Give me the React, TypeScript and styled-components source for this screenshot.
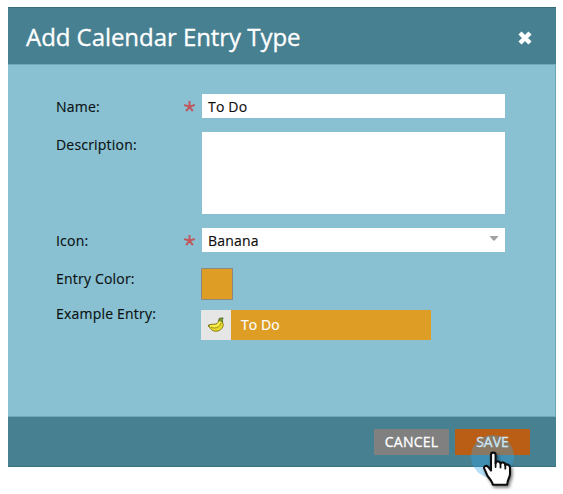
import React from 'react';
import styled, { createGlobalStyle } from 'styled-components';

const GlobalStyle = createGlobalStyle`
  *, *::before, *::after { box-sizing: border-box; }
  body { margin: 0; background: #fff; font-family: 'Open Sans', 'Noto Sans', sans-serif; }
`;

const Page = styled.main`
  height: 494px;
  padding: 7px 0 0 8px;
  overflow: hidden;
`;

const Dialog = styled.section`
  display: flex;
  flex-direction: column;
  width: 548px;
  height: 460px;
  background: #89c1d2;
  border-right: 1px solid #6ba3b5;
`;

const Header = styled.header`
  display: flex;
  align-items: center;
  justify-content: space-between;
  height: 58px;
  margin-right: -1px;
  padding: 2px 23px 0 18px;
  background: #478091;
  border-top: 1px solid #386d7d;
  border-bottom: 1px solid #6fa9ba;
`;

const Title = styled.h1`
  margin: 0;
  color: #fff;
  font-size: 24px;
  line-height: 32px;
  font-weight: 400;
  letter-spacing: -0.05px;
  white-space: nowrap;
  -webkit-text-stroke: 0.3px #fff;
`;

const CloseButton = styled.button`
  display: flex;
  padding: 2px 0 0;
  border: 0;
  background: none;
`;

const Form = styled.form`
  flex: 1;
  padding: 29px 0 0 48px;
`;

const Row = styled.div<{ $height: number; $gap: number }>`
  display: grid;
  grid-template-columns: 127px 19px 303px;
  height: ${(p) => p.$height}px;
  margin-bottom: ${(p) => p.$gap}px;
`;

const Label = styled.label<{ $top?: number }>`
  margin-top: ${(p) => p.$top ?? 3}px;
  color: #0a1011;
  font-size: 14px;
  line-height: 20px;
  letter-spacing: 0.2px;
  white-space: nowrap;
  -webkit-text-stroke: 0.15px #0a1011;
`;

const Required = styled.svg`
  width: 13px;
  height: 13px;
  margin: 6px 0 0 0;
`;

const Field = styled.div`
  display: flex;
  align-items: center;
  justify-content: space-between;
  grid-column: 3;
  padding: 2px 6px 0;
  background: #fff;
  color: #0c0c0c;
  font-size: 14px;
  line-height: 20px;
  letter-spacing: 0.2px;
  -webkit-text-stroke: 0.15px #0c0c0c;
`;

const Arrow = styled.svg`
  margin-top: -5px;
`;

const Swatch = styled.div`
  grid-column: 3;
  width: 32px;
  height: 32px;
  margin-left: -1px;
  background: #de9d24;
  border: 1px solid #8b8882;
`;

const Entry = styled.div`
  display: flex;
  grid-column: 3;
  width: 230px;
  margin-left: -1px;
  background: #de9d24;
`;

const EntryIcon = styled.div`
  display: flex;
  align-items: center;
  justify-content: center;
  width: 30px;
  background: #e6e6e6;
`;

const EntryName = styled.span`
  padding: 5px 0 0 10px;
  color: #fff;
  font-size: 14px;
  line-height: 20px;
  font-weight: 500;
  letter-spacing: 0.1px;
  -webkit-text-stroke: 0.2px #fff;
`;

const Footer = styled.footer`
  display: flex;
  justify-content: flex-end;
  gap: 6px;
  height: 51px;
  margin-right: -1px;
  padding: 12px 26px 0 0;
  background: #478091;
  border-top: 1px solid #6fa9ba;
  border-bottom: 1px solid #3b7080;
`;

const Button = styled.button<{ $primary?: boolean }>`
  position: relative;
  width: 75px;
  height: 26px;
  padding: 0;
  border: 0;
  background: ${(p) => (p.$primary ? '#ba5e16' : '#808080')};
  color: ${(p) => (p.$primary ? '#cbe8fa' : '#fff')};
  font: 400 14px/26px 'Open Sans', sans-serif;
  letter-spacing: ${(p) => (p.$primary ? '0' : '0.2px')};
  -webkit-text-stroke: 0.3px currentColor;
`;

const ButtonText = styled.span`
  position: relative;
  z-index: 1;
`;

const Halo = styled.span`
  position: absolute;
  left: 16px;
  top: 6px;
  width: 43px;
  height: 43px;
  border-radius: 50%;
  background: rgba(54, 165, 232, 0.37);
`;

const Pointer = styled.svg`
  position: absolute;
  z-index: 2;
  left: 13px;
  top: 3px;
  overflow: visible;
  pointer-events: none;
`;

const Asterisk = () => (
  <Required viewBox="0 0 13 13" fill="none" stroke="#c0575d" strokeWidth="2">
    <path d="M6.5 6.6V1M6.5 6.6L1.2 5M6.5 6.6L11.8 5M6.5 6.6L3.2 11.2M6.5 6.6L9.8 11.2" />
  </Required>
);

const Banana = () => (
  <svg width="18" height="18" viewBox="0 0 18 18" fill="none">
    <path
      d="M11.7 4.4C11.5 7.3 9 8.5 6.2 8.2L2.6 8.6L1.6 10L3.4 12.4C5.4 15.4 9.3 16 12.3 14.4C15.8 12.7 17 9.3 15.7 6.7L14.5 4.2Z"
      fill="#e9da2b"
      stroke="#857a1b"
      strokeWidth="1"
    />
    <path d="M3.5 9.5C7.8 11.2 11.6 10 13.2 5.2" stroke="#fff56a" strokeWidth="1.2" />
    <path d="M4 11.2C8.8 13.2 12.8 11.5 14.2 6.7" stroke="#9c8f1c" strokeWidth="0.9" />
    <path d="M11.8 5L12.1 2.4L16 1.9L15.8 3.1L15 3.7L15.8 6.2" fill="#7d9a30" stroke="#4c6922" strokeWidth="0.9" />
    <path d="M1.7 8.7V10.6" stroke="#70651c" strokeWidth="1.2" />
  </svg>
);

const HandPointer = () => (
  <Pointer width="50" height="54" viewBox="0 0 50 54">
    <defs>
      <filter id="handShadow" x="-30%" y="-20%" width="170%" height="160%">
        <feDropShadow dx="1.5" dy="2" stdDeviation="1.6" floodColor="#000" floodOpacity="0.5" />
      </filter>
    </defs>
    <g filter="url(#handShadow)" strokeLinecap="round" strokeLinejoin="round">
      <path
        d="M23 22.7C23 19.9 27.6 19.9 27.6 22.7V31.2C27.8 28.7 32.5 29 32.5 31.8C33 29.6 37.3 30.3 37.3 33.3C38.3 31.6 42 32.6 42 35.6V42.2C42 45 39.5 47 39.2 52.7H24.8C24.3 49.7 21.8 46.6 19.7 44.2C18.3 41.8 17.8 39.3 16.5 37.2C14.7 34 18.7 32.9 20.4 35.2L23 38.5Z"
        fill="#fff"
        stroke="#101010"
        strokeWidth="2.1"
      />
      <path d="M27.6 30.5V35M32.5 31.7V35.5M37.3 33.2V36.7" stroke="#101010" strokeWidth="1.8" />
    </g>
  </Pointer>
);

export default function App() {
  return (
    <Page>
      <GlobalStyle />
      <Dialog>
        <Header>
          <Title>Add Calendar Entry Type</Title>
          <CloseButton aria-label="Close">
            <svg width="16" height="16" viewBox="0 0 16 16">
              <path d="M3 3L13 13M13 3L3 13" stroke="#fff" strokeWidth="4.4" />
            </svg>
          </CloseButton>
        </Header>
        <Form>
          <Row $height={24} $gap={14}>
            <Label>Name:</Label>
            <Asterisk />
            <Field>To Do</Field>
          </Row>
          <Row $height={82} $gap={14}>
            <Label>Description:</Label>
            <Field />
          </Row>
          <Row $height={24} $gap={16}>
            <Label>Icon:</Label>
            <Asterisk />
            <Field>
              Banana
              <Arrow width="10" height="5" viewBox="0 0 10 5">
                <path d="M0.5 0H9.5L5.8 4.5H4.2Z" fill="#a2a2a2" />
              </Arrow>
            </Field>
          </Row>
          <Row $height={32} $gap={10}>
            <Label $top={1}>Entry Color:</Label>
            <Swatch />
          </Row>
          <Row $height={30} $gap={0}>
            <Label $top={-6}>Example Entry:</Label>
            <Entry>
              <EntryIcon>
                <Banana />
              </EntryIcon>
              <EntryName>To Do</EntryName>
            </Entry>
          </Row>
        </Form>
        <Footer>
          <Button>CANCEL</Button>
          <Button $primary>
            <Halo />
            <ButtonText>SAVE</ButtonText>
            <HandPointer />
          </Button>
        </Footer>
      </Dialog>
    </Page>
  );
}
